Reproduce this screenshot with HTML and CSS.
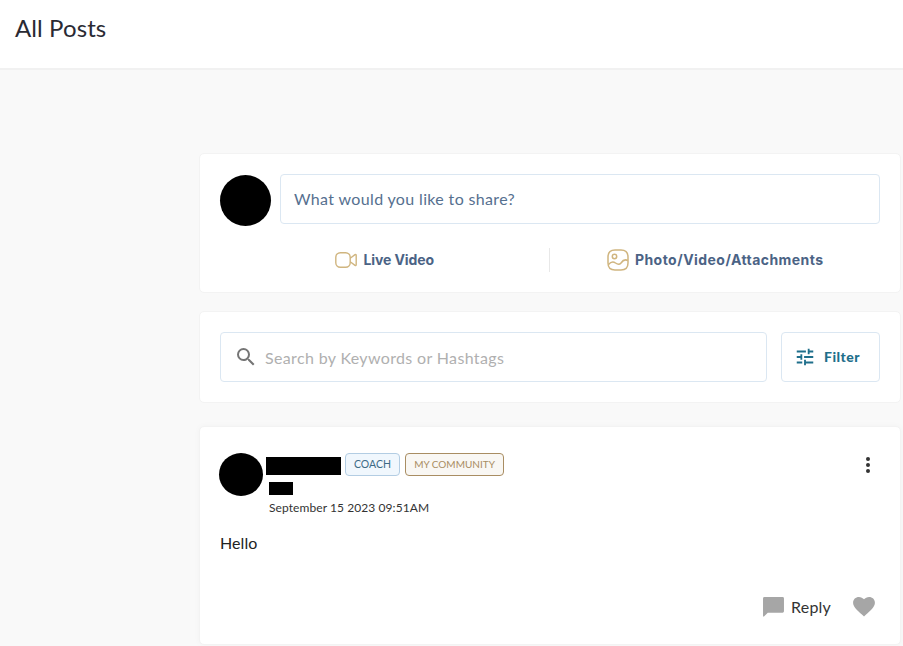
FILE: index.html
```html
<!DOCTYPE html>
<html lang="en">
<head>
<meta charset="utf-8">
<title>All Posts</title>
<link rel="stylesheet" href="styles.css">
</head>
<body>
<header class="topbar"><h1 class="title">All Posts</h1></header>
<main class="feed">
  <section class="card composer">
    <div class="composer-row">
      <div class="avatar avatar-lg"></div>
      <div class="field share-field">What would you like to share?</div>
    </div>
    <div class="actions">
      <div class="action">
        <svg class="icon-video" width="22" height="16" viewBox="0 0 22 16" fill="none" stroke="#d0b57f" stroke-width="1.4"><rect x="0.8" y="0.8" width="14.4" height="14.4" rx="4.5"/><path d="M15.2 6.200 L20 2.600 Q21.200 2 21.200 3.400 V12.600 Q21.200 14 20 13.400 L15.200 9.800"/></svg>
        <span>Live Video</span>
      </div>
      <div class="action-divider"></div>
      <div class="action action-wide">
        <svg class="icon-photo" width="22" height="22" viewBox="0 0 22 22" fill="none" stroke="#d0b57f" stroke-width="1.5"><path d="M8 1 H14 Q21 1 21 8 V14 Q21 21 14 21 H8 Q1 21 1 14 V8 Q1 1 8 1 Z"/><circle cx="7.5" cy="7.500" r="2.200"/><path d="M1.500 15.500 Q5 11.500 8.500 14 T14 14 Q17 9.500 20.800 11.500"/></svg>
        <span>Photo/Video/Attachments</span>
      </div>
    </div>
  </section>
  <section class="card search-card">
    <div class="field search-field">
      <svg width="24" height="24" viewBox="0 0 24 24" fill="#757575"><path d="M15.5 14h-.79l-.28-.27A6.47 6.47 0 0 0 16 9.5 6.5 6.5 0 1 0 9.5 16c1.61 0 3.09-.59 4.23-1.57l.27.28v.79l5 4.99L20.49 19l-4.99-5zm-6 0C7.01 14 5 11.99 5 9.5S7.01 5 9.5 5 14 7.01 14 9.5 11.99 14 9.5 14z"/></svg>
      <span>Search by Keywords or Hashtags</span>
    </div>
    <div class="field filter-btn">
      <svg width="22" height="22" viewBox="0 0 24 24" fill="#1f6f8b"><path d="M3 17v2h6v-2H3zM3 5v2h10V5H3zm10 16v-2h8v-2h-8v-2h-2v6h2zM7 9v2H3v2h4v2h2V9H7zm14 4v-2H11v2h10zm-6-4h2V7h4V5h-4V3h-2v6z"/></svg>
      <span class="filter-label">Filter</span>
    </div>
  </section>
  <article class="card post">
    <div class="post-head">
      <div class="avatar avatar-sm"></div>
      <div class="post-meta">
        <div class="name-row">
          <div class="redact redact-name"></div>
          <span class="badge badge-coach">COACH</span>
          <span class="badge badge-community">MY COMMUNITY</span>
        </div>
        <div class="redact redact-sub"></div>
        <div class="post-date">September 15 2023 09:51AM</div>
      </div>
      <div class="more"><i></i><i></i><i></i></div>
    </div>
    <p class="post-body">Hello</p>
    <div class="post-foot">
      <svg width="21" height="20" viewBox="0 0 22 21" fill="#a6a6a6"><path d="M1.500 0 H20.500 Q22 0 22 1.500 V15 Q22 16.500 20.500 16.500 H5 L1 20.500 Q0 21 0 19.500 V1.500 Q0 0 1.500 0 Z"/></svg>
      <span class="reply">Reply</span>
      <svg class="heart" width="22" height="20" viewBox="0 0 24 22" fill="#a6a6a6"><path d="M12 21.400l-1.700-1.600C4.100 14.200 0 10.500 0 6.200 0 2.700 2.800 0 6.400 0c2.200 0 4.300 1 5.600 2.600C13.300 1 15.400 0 17.600 0 21.200 0 24 2.700 24 6.200c0 4.300-4.100 8-10.300 13.600L12 21.400z"/></svg>
    </div>
  </article>
</main>
</body>
</html>
```
FILE: styles.css
```css
* { box-sizing: border-box; }
html, body { margin: 0; height: 100%; }
body {
  background: #f9f9f9;
  font-family: "Lato", "Open Sans", sans-serif;
  color: #222;
  overflow: hidden;
}
.topbar {
  height: 70px;
  background: #fff;
  border-bottom: 2px solid #f1f1f1;
  padding: 13px 15px 0;
}
.title {
  margin: 0;
  font-size: 24px;
  font-weight: 400;
  line-height: 30px;
  color: #2a2a33;
  letter-spacing: 0.1px;
}
.feed {
  padding: 83px 2px 0 199px;
  display: flex;
  flex-direction: column;
}
.card {
  background: #fff;
  border: 1px solid #f3f3f3;
  border-radius: 5px;
}
.composer { height: 140px; padding: 20px 20px 0; margin-bottom: 18px; }
.composer-row { display: flex; align-items: flex-start; gap: 9px; }
.avatar { background: #000; border-radius: 50%; flex: none; }
.avatar-lg { width: 51px; height: 51px; margin-top: 1px; }
.field {
  background: #fff;
  border: 1px solid #dbe7f2;
  border-radius: 4px;
  display: flex;
  align-items: center;
}
.share-field {
  flex: 1;
  height: 50px;
  padding: 0 0 2px 13px;
  font-size: 16px;
  letter-spacing: 0.35px;
  color: #56708f;
}
.actions { display: flex; align-items: center; margin-top: 22px; height: 24px; }
.action {
  flex: 1;
  display: flex;
  align-items: center;
  justify-content: center;
  gap: 6px;
  font-family: "Inter", sans-serif;
  font-size: 14px;
  font-weight: 700;
  letter-spacing: -0.1px;
  color: #4b6385;
}
.action span { margin-bottom: 2px; }
.action-wide { letter-spacing: 0.45px; }
.action-divider { width: 1px; height: 24px; margin: 0 1px 0 -1px; background: #e8e8e8; flex: none; }
.search-card { height: 92px; padding: 20px 20px 0; display: flex; gap: 14px; margin-bottom: 23px; }
.search-field {
  flex: 1;
  height: 50px;
  padding-left: 13px;
  gap: 7px;
  font-size: 16px;
  letter-spacing: 0.35px;
  color: #b0b0b0;
}
.filter-btn {
  width: 99px;
  height: 50px;
  padding-left: 12px;
  gap: 8px;
  font-size: 14px;
  font-weight: 900;
  letter-spacing: 0.5px;
  color: #1f6f8b;
}
.filter-label { margin-bottom: 2px; }
.post {
  height: 219px;
  padding: 26px 20px 0 19px;
  box-shadow: 0 0 6px rgba(0, 0, 0, 0.03);
  position: relative;
}
.post-head { display: flex; }
.avatar-sm { width: 44px; height: 43px; }
.post-meta { margin-left: 3px; flex: 1; }
.name-row { display: flex; align-items: center; gap: 4px; height: 23px; margin-top: 1px; }
.redact { background: #000; }
.redact-name { width: 75px; height: 18px; }
.redact-sub { width: 24px; height: 13px; margin: 5px 0 0 3px; }
.badge {
  height: 23px;
  margin-top: -3px;
  border-radius: 4px;
  font-size: 10.5px;
  line-height: 21px;
  text-align: center;
  white-space: nowrap;
  border: 1px solid;
}
.badge-coach { width: 55px; background: #f0f7fd; border-color: #b3cde3; color: #3d6a85; }
.badge-community { width: 99px; margin-left: 1px; font-size: 10px; background: #f9f7f3; border-color: #a98d62; color: #a98d62; }
.post-date { font-size: 12px; line-height: 16px; margin: 5px 0 0 3px; letter-spacing: 0.08px; color: #333; }
.more { display: flex; flex-direction: column; gap: 2px; width: 4px; margin: 4px 10px 0 0; }
.more i { width: 4px; height: 4px; border-radius: 50%; background: #333; }
.post-body { margin: 0; padding: 0 0 0 1px; font-size: 16px; line-height: 22px; letter-spacing: 0.1px; position: absolute; top: 105px; }
.post-foot {
  position: absolute;
  right: 25px;
  bottom: 27px;
  display: flex;
  align-items: center;
  font-size: 16px;
  color: #333;
}
.reply { margin: 0 22px 1px 7px; letter-spacing: 0.2px; }
```
